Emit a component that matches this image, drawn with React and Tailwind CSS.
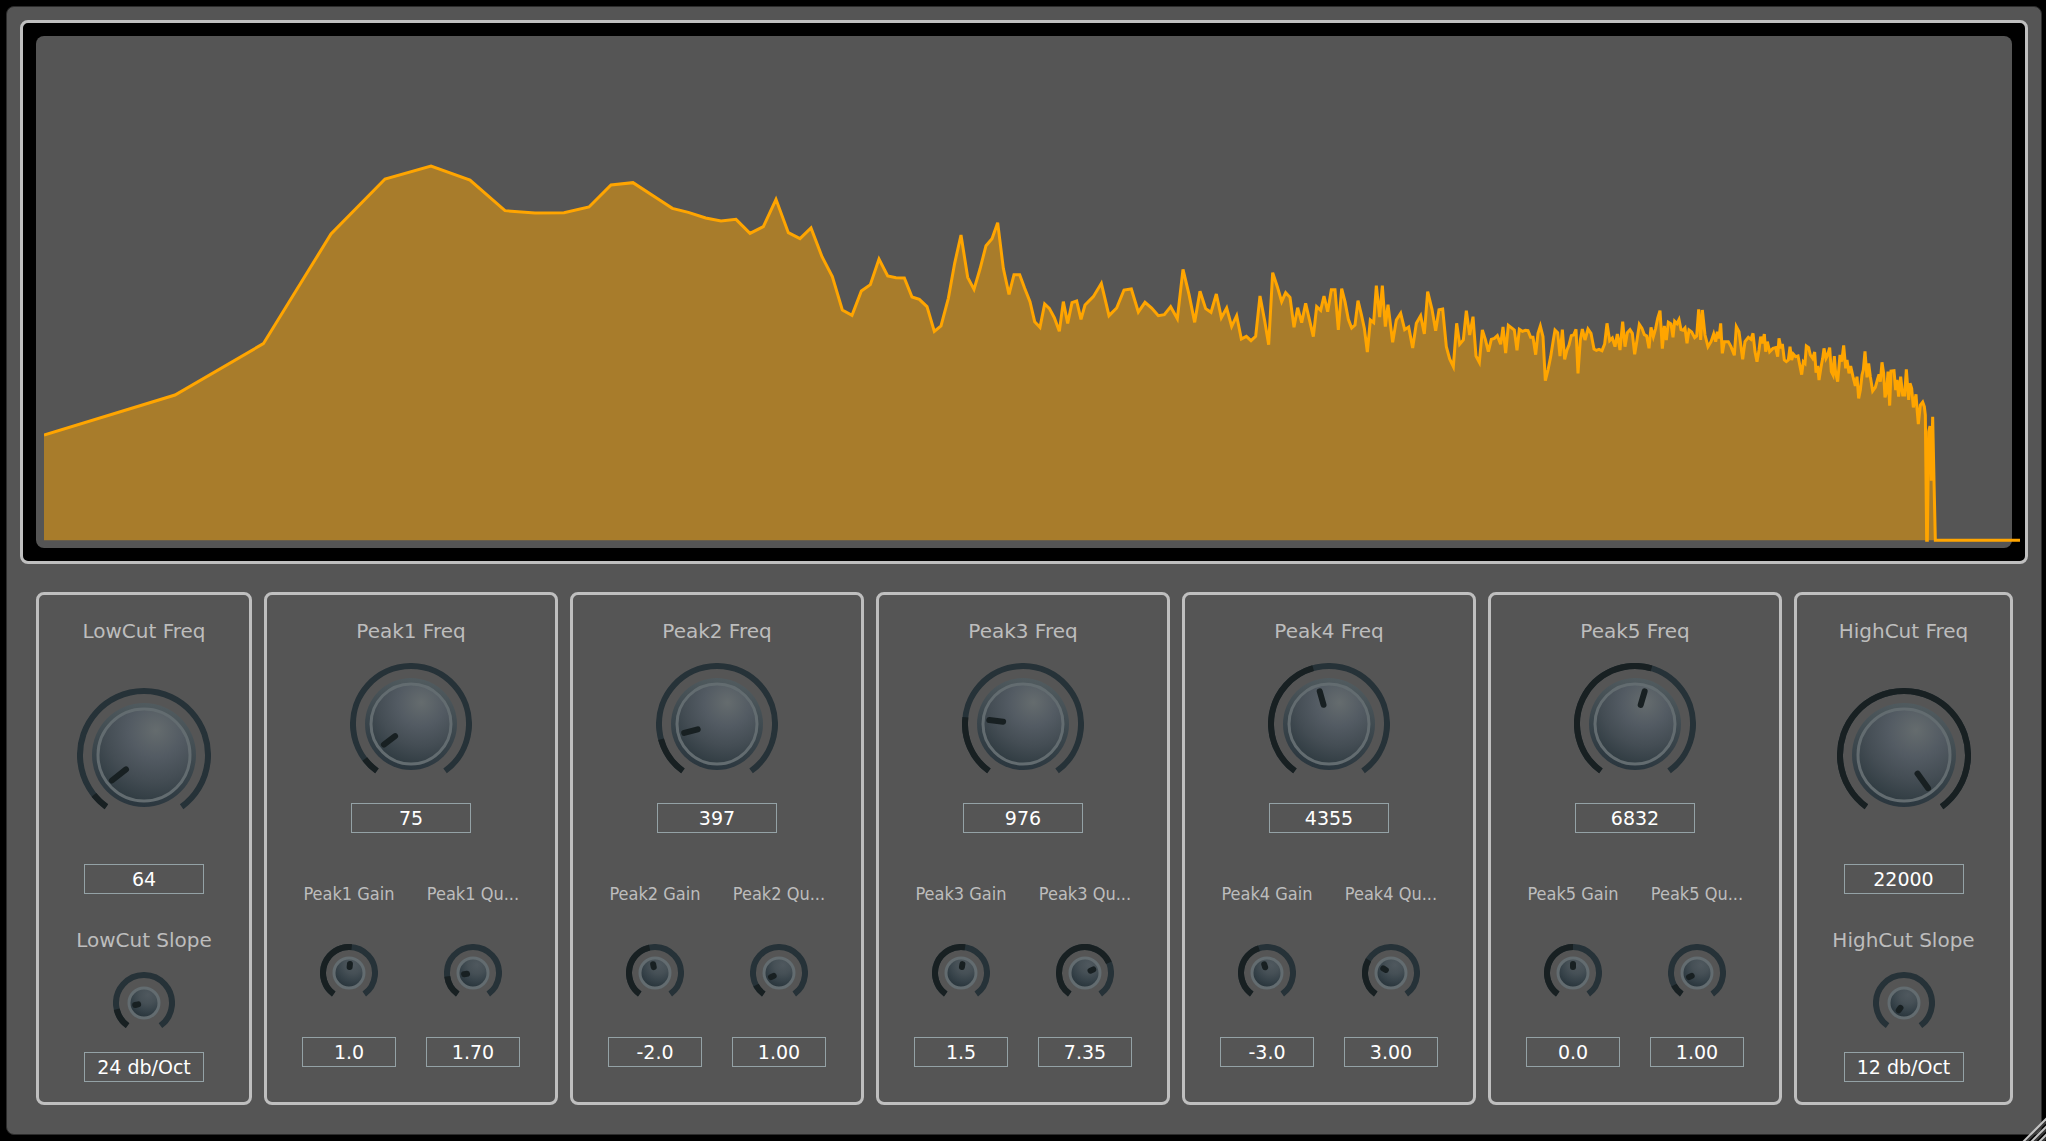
import { useId, useState } from "react";

/* ---------- spectrum data: three units per pixel, each band has its own origin ---------- */

const BANDS = [
  {
    origin: [0, 0],
    points:
      "0,1197 393,1077 658,923 861,594 1023,429 1161,390 1278,432 1383,524 1473,531 1560,530 1635,513 1701,447 1767,440",
  },
  {
    origin: [1848, 342],
    points:
      "0,151 37,175 85,187 137,204 183,213 228,208 270,250 310,230 348,148 385,248 420,266 453,234 486,320 517,380 547,480 576,496 604,423 631,404 657,327 683,378 708,383 733,384 756,441 778,448 801,470 823,544 843,528 865,445 884,340 903,255 923,382 942,418 960,357 978,287 996,266 1013,218 1030,355 1047,433 1062,374 1079,374 1094,415",
  },
  {
    origin: [2958, 552],
    points:
      "0,245 14,305 30,322 44,252 58,265 73,293 88,334 100,245 113,310 126,248 140,243 153,298 165,255 190,230 214,190 237,287 260,264 282,210 304,207 325,276 345,247 365,264 385,287 403,284 422,260 442,296 459,148 477,223 494,307 510,214 527,266 543,277 559,222 574,293 590,264 605,319 620,287 634,357 649,349 663,362 677,349 690,228 704,302 716,374 728,158 742,200 755,245 767,218 780,232 792,322 803,263 815,308 827,250 838,298 850,350 860,260 872,271 882,228 893,275 904,209 915,209 925,330 935,206 945,245 955,298 965,324 975,315 984,242 994,283 1003,325 1012,396 1021,300 1031,308 1039,197 1049,291",
  },
  {
    origin: [4008, 642],
    points:
      "7,107 16,230 24,164 38,277 49,210 62,190 74,239 86,231 98,294 109,220 122,197 133,252 143,125 156,178 167,242 177,179 188,177 199,290 209,327 220,350 230,220 239,283 250,270 259,182 269,255 279,200 288,318 298,337 307,240 316,268 325,305 334,268 343,265 352,257 362,283 369,231 377,309 385,226 394,233 403,240 411,301 418,238 427,244 436,241 444,242 452,262 459,262 467,314 474,250 481,228 489,260 496,392 504,360 512,320 520,270 525,240 533,248 540,318 547,239 554,328 561,300 567,285 574,257 581,255 588,238 594,370 601,270 607,237 615,270 624,237 633,250 642,297 649,301 657,298 666,302 674,282 681,220 689,272 697,264 705,290 712,252 720,300 728,215 735,290 742,248 750,239 757,250 764,313 771,270 778,223 786,235 793,254 800,258 807,295 813,232 820,260 827,235 833,205 840,182 847,296 853,228 859,270 865,217 873,222 879,262 884,214 891,221 897,209 903,239 909,241 915,234 921,280 927,240 935,246 944,263 950,258",
  },
  {
    origin: [4908, 732],
    points:
      "56,88 62,180 67,90 75,165 84,200 93,185 101,162 107,185 112,155 117,175 122,130 127,220 133,185 145,185 153,200 163,226 169,140 177,155 188,238 195,185 205,172 213,178 219,160 225,215 231,245 237,210 242,170 247,190 253,162 257,215 262,185 269,215 279,205 287,203 293,230 297,175 303,205 307,192 313,240 319,245 325,240 330,200 335,240 340,222 347,230 354,228 365,284 370,245 375,250 379,198 386,203 391,225 398,235 404,216 408,278 413,258 417,300 423,262 428,235 432,205 438,235 443,225 449,203 454,275 459,285 463,228 467,280 473,305 480,225 485,245 491,196 497,265 501,240 507,280 512,258 519,290 526,318 531,290 536,355 541,330 546,285 550,270 555,214 561,292 566,250 571,290 578,333 586,322 592,300 597,283 601,305 606,247 611,280 615,352 620,335 624,275 629,377 633,273 642,272 647,330 651,300 656,350 662,290 668,345 674,345 679,268 686,360 690,310 695,325 700,382 708,343 711,385 715,432 721,375 728,366 733,380 736,405 740,781 742,781 746,455 750,438 754,602 758,410 762,602 766,781 1020,781",
  },
];

const LINE = BANDS.flatMap(({ origin, points }) =>
  points.split(" ").map((p) => {
    const [x, y] = p.split(",").map(Number);
    return [x + origin[0], y + origin[1]];
  })
);
const LINE_D = "M" + LINE.map((p) => p.join(" ")).join("L");
const AREA_D = `${LINE_D}L5928 1513L0 1513Z`;

function Spectrum() {
  return (
    <section
      aria-label="Spectrum"
      className="mx-[13px] mt-[13px] rounded-lg border-[3px] border-[#bfbfbf] bg-black p-[13px]"
    >
      <div className="rounded-lg bg-[#555555] pl-2">
        <svg
          viewBox="0 0 5928 1536"
          preserveAspectRatio="none"
          className="block h-[512px] w-[calc(100%+8px)]"
          aria-hidden="true"
        >
          <path d={AREA_D} fill="#ffa500" fillOpacity="0.49" />
          <path d={LINE_D} fill="none" stroke="#ffa500" strokeWidth="3" vectorEffect="non-scaling-stroke" />
        </svg>
      </div>
    </section>
  );
}

/* ---------- parameters ---------- */

const UNITS = {
  freq: { min: 0, max: 22000, step: 1, toPos: (v) => Math.sqrt(v / 22000), toValue: (p) => p * p * 22000, text: (v) => v.toFixed(0) },
  gain: { min: -24, max: 24, step: 0.5, toPos: (v) => (v + 24) / 48, toValue: (p) => p * 48 - 24, text: (v) => v.toFixed(1) },
  quality: { min: 0.1, max: 10, step: 0.05, toPos: (v) => (v - 0.1) / 9.9, toValue: (p) => p * 9.9 + 0.1, text: (v) => v.toFixed(2) },
  slope: { min: 0, max: 7, step: 1, toPos: (v) => v / 7, toValue: (p) => p * 7, text: (v) => `${12 * (v + 1)} db/Oct` },
};

const PEAKS = [
  { name: "Peak1", freq: 75, gain: 1, quality: 1.7 },
  { name: "Peak2", freq: 397, gain: -2, quality: 1 },
  { name: "Peak3", freq: 976, gain: 1.5, quality: 7.35 },
  { name: "Peak4", freq: 4355, gain: -3, quality: 3 },
  { name: "Peak5", freq: 6832, gain: 0, quality: 1 },
];

/* ---------- knob ---------- */

const KNOBS = {
  large: { size: 134, body: 52, ring: 46, tip: 41, tail: 23, box: "size-[134px]" },
  medium: { size: 122, body: 46, ring: 40, tip: 34, tail: 20, box: "size-[122px]" },
  small: { size: 62, body: 16, ring: 15, tip: 9, tail: 6, box: "size-[62px]" },
  mini: { size: 58, body: 16, ring: 15, tip: 9, tail: 6, box: "size-[58px]" },
};

const at = (deg, r) => {
  const a = (deg * Math.PI) / 180;
  return `${(r * Math.sin(a)).toFixed(2)} ${(-r * Math.cos(a)).toFixed(2)}`;
};
const arc = (from, to, r) => `M${at(from, r)}A${r} ${r} 0 ${to - from > 180 ? 1 : 0} 1 ${at(to, r)}`;

function Knob({ kind, pos }) {
  const uid = useId();
  const { size, body, ring, tip, tail, box } = KNOBS[kind];
  const half = size / 2;
  const r = half - 3;
  const angle = 216 + 288 * pos;
  const tiny = body < 20;
  return (
    <svg viewBox={`${-half} ${-half} ${size} ${size}`} className={`block ${box}`} aria-hidden="true">
      <defs>
        <linearGradient id={`${uid}rim`} x1="0.6" y1="0" x2="0.4" y2="1">
          <stop offset="0" stopColor="#515b5f" />
          <stop offset="0.5" stopColor="#3c474d" />
          <stop offset="1" stopColor="#2a363e" />
        </linearGradient>
        <radialGradient id={`${uid}face`} cx="0.63" cy="0.23" r="0.84">
          <stop offset="0" stopColor={tiny ? "#4f585e" : "#656c6e"} />
          <stop offset="0.35" stopColor={tiny ? "#465056" : "#535b63"} />
          <stop offset="0.65" stopColor={tiny ? "#364249" : "#444d54"} />
          <stop offset="1" stopColor={tiny ? "#243037" : "#2d393f"} />
        </radialGradient>
      </defs>
      <path d={arc(216, 504, r)} fill="none" stroke="#263238" strokeWidth="6" />
      {pos > 0 && <path d={arc(216, angle, r)} fill="none" stroke="#182022" strokeWidth="6" />}
      <circle r={body} fill={`url(#${uid}rim)`} />
      <circle r={ring} fill={`url(#${uid}face)`} stroke="#636c70" strokeWidth="3" />
      <path d={`M${at(angle, tail)}L${at(angle, tip)}`} stroke="#182022" strokeWidth="6" strokeLinecap="round" />
    </svg>
  );
}

function Control({ label, shown, unit, initial, kind, labelClass, knobClass, boxClass }) {
  const id = useId();
  const { min, max, step, toPos, toValue, text } = UNITS[unit];
  const [value, setValue] = useState(initial);
  const pos = toPos(value);

  const turn = (e) => {
    const raw = toValue(Number(e.target.value));
    const snapped = Math.round((raw - min) / step) * step + min;
    setValue(Math.min(max, Math.max(min, snapped)));
  };

  return (
    <div className="flex flex-col items-center">
      <label htmlFor={id} className={`whitespace-nowrap leading-6 text-[#bdbdbd] ${labelClass}`}>
        {shown ?? label}
      </label>
      <div className={`relative ${knobClass}`}>
        <Knob kind={kind} pos={pos} />
        <input
          id={id}
          type="range"
          min="0"
          max="1"
          step="any"
          value={pos}
          onChange={turn}
          className="absolute inset-0 size-full cursor-pointer opacity-0"
        />
      </div>
      <input
        type="text"
        readOnly
        aria-label={`${label} value`}
        value={text(value)}
        className={`h-[30px] border border-[#94a2a6] bg-transparent p-0 text-center text-[19px] leading-7 text-white outline-none ${boxClass}`}
      />
    </div>
  );
}

/* ---------- cards ---------- */

const CARD = "flex flex-col rounded-lg border-[3px] border-[#bfbfbf] pt-6";

function CutCard({ name, freq, slope }) {
  return (
    <section aria-label={name} className={`${CARD} gap-[34px] pb-5`}>
      <Control label={`${name} Freq`} unit="freq" initial={freq} kind="large" labelClass="text-xl" knobClass="mt-[45px] mb-[42px]" boxClass="w-[120px]" />
      <Control label={`${name} Slope`} unit="slope" initial={slope} kind="small" labelClass="text-xl" knobClass="mt-5 mb-[18px]" boxClass="w-[120px]" />
    </section>
  );
}

const NARROW = "font-['DejaVu_Sans_Condensed','DejaVu_Sans',sans-serif] text-lg";

function PeakCard({ name, freq, gain, quality }) {
  return (
    <section aria-label={name} className={`${CARD} gap-[49px] px-5`}>
      <Control label={`${name} Freq`} unit="freq" initial={freq} kind="medium" labelClass="text-xl" knobClass="mt-5 mb-[18px]" boxClass="w-[120px]" />
      <div className="grid grid-cols-2">
        <Control label={`${name} Gain`} unit="gain" initial={gain} kind="mini" labelClass={NARROW} knobClass="mt-[38px] mb-[35px]" boxClass="w-[94px]" />
        <Control label={`${name} Quality`} shown={`${name} Qu...`} unit="quality" initial={quality} kind="mini" labelClass={NARROW} knobClass="mt-[38px] mb-[35px]" boxClass="w-[94px]" />
      </div>
    </section>
  );
}

function ResizeGrip() {
  return (
    <svg viewBox="0 0 24 24" className="absolute right-0 bottom-0 size-6" aria-hidden="true">
      {[2, 10, 18].map((o) => (
        <g key={o} strokeWidth="2">
          <path d={`M${o + 2} 25L25 ${o + 2}`} stroke="#3a3a3a" />
          <path d={`M${o - 1} 25L25 ${o - 1}`} stroke="#c4c4c4" />
        </g>
      ))}
    </svg>
  );
}

export default function App() {
  return (
    <main className="relative min-h-screen bg-black pt-1.5 pr-1 pb-1.5 pl-1.5 font-['DejaVu_Sans',sans-serif]">
      <div className="rounded-lg border border-[#2b2b2b] bg-[#555555] pb-[29px]">
        <Spectrum />
        <div className="mt-7 mr-[28px] ml-[29px] grid grid-cols-[216fr_294fr_294fr_294fr_294fr_294fr_219fr] gap-3">
          <CutCard name="LowCut" freq={64} slope={1} />
          {PEAKS.map((p) => (
            <PeakCard key={p.name} {...p} />
          ))}
          <CutCard name="HighCut" freq={22000} slope={0} />
        </div>
      </div>
      <ResizeGrip />
    </main>
  );
}
